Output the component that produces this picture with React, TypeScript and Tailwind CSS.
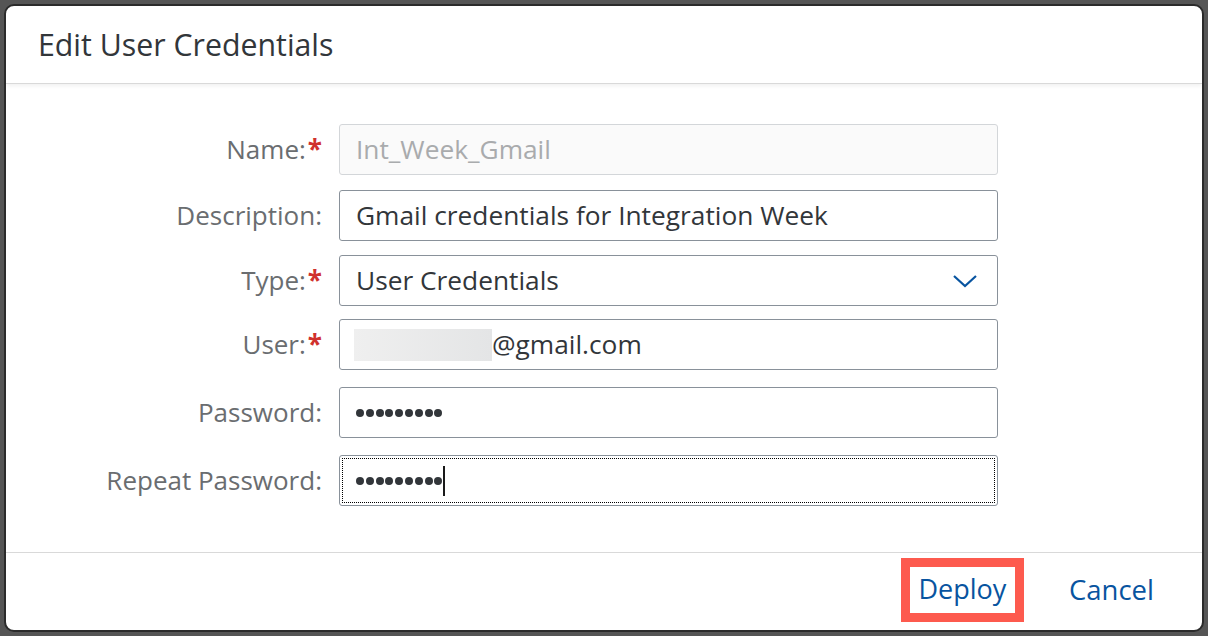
import React from 'react';

const font = { fontFamily: '"Open Sans", "Liberation Sans", sans-serif' };

type Row = { label: string; required?: boolean; gap: string; field: React.ReactNode };

const Dots: React.FC<{ count: number }> = ({ count }) => (
  <div className="flex items-center gap-[1.8px]">
    {Array.from({ length: count }).map((_, i) => (
      <span key={i} className="block h-[8px] w-[8px] rounded-full bg-[#32363a]" />
    ))}
  </div>
);

const Input: React.FC<{ children: React.ReactNode; disabled?: boolean; focused?: boolean }> = ({
  children,
  disabled,
  focused,
}) => (
  <div
    className={
      'relative flex h-[51px] w-[659px] items-center rounded-[3px] border px-[16px] text-[26.3px] ' +
      (disabled
        ? 'border-[#d3d6d9] bg-[#fafafa] text-[#a9abad]'
        : 'border-[#89919a] bg-white text-[#32363a]')
    }
  >
    {focused && (
      <div className="pointer-events-none absolute inset-[2px] border border-dotted border-black" />
    )}
    {children}
  </div>
);

export default function App() {
  const rows: Row[] = [
    { label: 'Name:', required: true, gap: 'mt-0', field: <Input disabled>Int_Week_Gmail</Input> },
    {
      label: 'Description:',
      gap: 'mt-[15px]',
      field: <Input>Gmail credentials for Integration Week</Input>,
    },
    {
      label: 'Type:',
      required: true,
      gap: 'mt-[14px]',
      field: (
        <Input>
          <span className="flex-1">User Credentials</span>
          <svg width="26" height="16" viewBox="0 0 26 16" className="mr-[3px]">
            <path d="M2 3 L13 13 L24 3" fill="none" stroke="#0854a0" strokeWidth="2.2" />
          </svg>
        </Input>
      ),
    },
    {
      label: 'User:',
      required: true,
      gap: 'mt-[13px]',
      field: (
        <Input>
          <span className="-ml-[2px] block h-[32px] w-[138px] bg-gradient-to-r from-[#efefef] to-[#e4e5e6]" />
          <span>@gmail.com</span>
        </Input>
      ),
    },
    { label: 'Password:', gap: 'mt-[17px]', field: <Input><Dots count={9} /></Input> },
    {
      label: 'Repeat Password:',
      gap: 'mt-[17px]',
      field: (
        <Input focused>
          <Dots count={9} />
          <span className="ml-[1px] block h-[30px] w-[2px] bg-[#1a1a1a]" />
        </Input>
      ),
    },
  ];

  return (
    <div className="h-[636px] w-[1208px] bg-[#555555] p-[4px]" style={font}>
      <div className="flex h-[628px] flex-col overflow-hidden rounded-[10px] border-2 border-[#2b2b2b] bg-white">
        <div className="flex h-[78px] items-center border-b border-[#d9d9d9] px-[32px] shadow-[0_2px_4px_rgba(0,0,0,0.06)]">
          <h1 className="text-[30.3px] font-normal text-[#32363a]">Edit User Credentials</h1>
        </div>

        <div className="flex flex-1 flex-col pt-[40px]">
          {rows.map((r) => (
            <div key={r.label} className={'flex items-center ' + r.gap}>
              <div className="w-[316px] whitespace-nowrap text-right text-[26px] text-[#6a6d70]">
                {r.label}
                {r.required && <span className="ml-[2px] font-bold text-[#d0312d]">*</span>}
              </div>
              <div className="ml-[17px]">{r.field}</div>
            </div>
          ))}
        </div>

        <div className="flex h-[78px] items-center justify-end border-t border-[#d9d9d9] pb-[4px] pr-[35px]">
          <button className="flex h-[64px] w-[123px] items-center justify-center border-[9px] border-[#fd5a4e] text-[27px] text-[#0854a0]">
            Deploy
          </button>
          <button className="ml-[32px] px-[13px] text-[27.5px] text-[#0854a0]">Cancel</button>
        </div>
      </div>
    </div>
  );
}
